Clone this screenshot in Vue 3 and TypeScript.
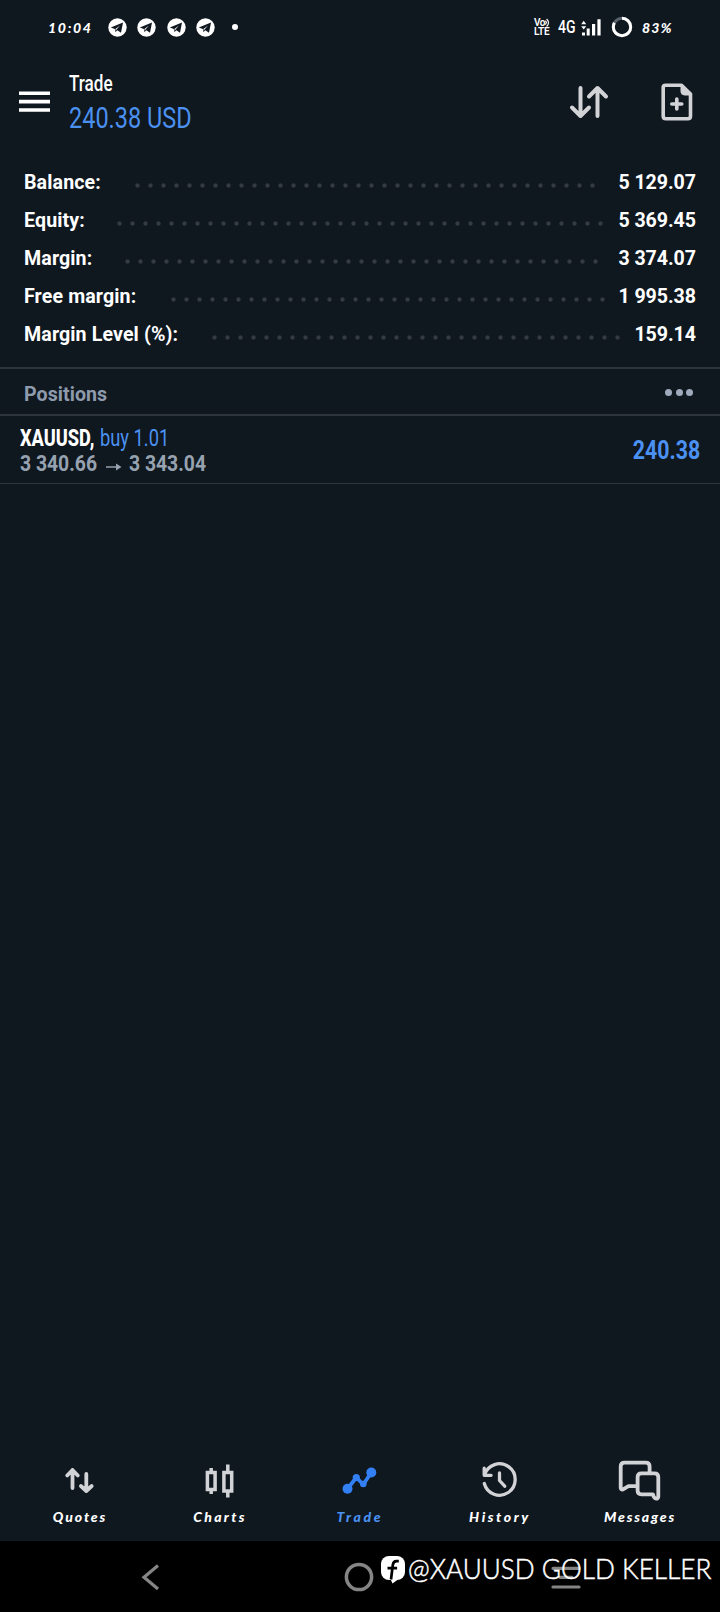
<script setup lang="ts">
interface SummaryRow {
  label: string
  value: string
  leaderStart: number
  dots: number
}

interface Tab {
  name: string
  tracking: number
}

const DOT_PITCH = 13
const ROW_INSET = 24

const summary: SummaryRow[] = [
  { label: 'Balance:', value: '5 129.07', leaderStart: 130.5, dots: 36 },
  { label: 'Equity:', value: '5 369.45', leaderStart: 112.5, dots: 38 },
  { label: 'Margin:', value: '3 374.07', leaderStart: 120.5, dots: 37 },
  { label: 'Free margin:', value: '1 995.38', leaderStart: 166.5, dots: 34 },
  { label: 'Margin Level (%):', value: '159.14', leaderStart: 207.5, dots: 32 },
]

const tabs: Tab[] = [
  { name: 'Quotes', tracking: 1.9 },
  { name: 'Charts', tracking: 2.3 },
  { name: 'Trade', tracking: 2.7 },
  { name: 'History', tracking: 2.6 },
  { name: 'Messages', tracking: 1.8 },
]
const activeTab = 'Trade'
</script>

<template>
  <div class="screen">
    <header class="status">
      <span class="clock">10:04</span>
      <div class="notices">
        <svg v-for="n in 4" :key="n" class="telegram" viewBox="0 0 19 19">
          <circle cx="9.5" cy="9.5" r="9.2" fill="#fff" />
          <path d="M2.8 9.5 15 4.6 13 14.8 9.4 12.2 7.4 14 6.8 11Z" fill="#0f171f" />
          <path d="M7.4 10.9 12 7.5 8.5 11.5 7.8 13Z" fill="#fff" />
        </svg>
        <span class="more-notices"></span>
      </div>
      <div class="system">
        <span class="volte">
          <span class="vo">Vo<svg viewBox="0 0 6 9"><path d="M.3 2.8q2 1.7 0 3.8M1.6 1q3.8 3.5 0 7.5" fill="none" stroke="#fff" stroke-width="1.2" /></svg></span>
          <span class="lte">LTE</span>
        </span>
        <span class="network"><span>4G</span></span>
        <svg class="signal" viewBox="0 0 20 17">
          <path d="M2.7 1.8 5.2 5.2H.2ZM2.7 10.6 5.2 7.2H.2Z" fill="#fff" />
          <path d="M1 13.500h3v3H1ZM5.700 9.500h3v7h-3ZM11 5h3.200v11.500H11ZM16.400.300h3.200v16.200h-3.200Z" fill="#fff" />
        </svg>
        <svg class="battery" viewBox="0 0 22 22">
          <circle cx="11" cy="11" r="8.7" fill="none" stroke="#59616a" stroke-width="3" />
          <circle cx="11" cy="11" r="8.7" fill="none" stroke="#fff" stroke-width="3" pathLength="100" stroke-dasharray="83 17" transform="rotate(-90 11 11)" />
        </svg>
        <span class="percent">83%</span>
      </div>
    </header>

    <section class="titlebar">
      <svg class="burger" viewBox="0 0 32 22"><path d="M0 2.2h31M0 10.6h31M0 19h31" stroke="#fff" stroke-width="3.6" /></svg>
      <div class="heading">
        <h1><span>Trade</span></h1>
        <p><span>240.38 USD</span></p>
      </div>
      <svg class="sort" viewBox="0 0 40 34">
        <path d="M11.5 3v28M3 22.5l8.5 8.5 8.5-8.5M28.5 31V3M20 11.5 28.5 3l8.5 8.5" fill="none" stroke="#d2d3d6" stroke-width="4" stroke-linecap="round" stroke-linejoin="round" />
      </svg>
      <svg class="new-order" viewBox="0 0 32 38">
        <path d="M4.5 2.2H20.5L29.5 11V33q0 2.7-2.7 2.7H4.9Q2.2 35.7 2.2 33V4.5Q2.2 2.2 4.5 2.2Z" fill="none" stroke="#d2d3d6" stroke-width="3.6" stroke-linejoin="round" />
        <path d="M19.5 2.5h1.5l8.7 8.6v1.5h-6q-4.2-.5-4.2-4.6Z" fill="#d2d3d6" />
        <path d="M10.8 21h10M15.8 16v10" stroke="#d2d3d6" stroke-width="3.6" stroke-linecap="round" />
      </svg>
    </section>

    <section class="summary">
      <div v-for="row in summary" :key="row.label" class="summary-row">
        <span class="label" :style="{ flexBasis: row.leaderStart - ROW_INSET + 'px' }">{{ row.label }}</span>
        <span class="leader" :style="{ width: row.dots * DOT_PITCH + 'px' }"></span>
        <span class="value">{{ row.value }}</span>
      </div>
    </section>

    <section class="positions-head">
      <h2>Positions</h2>
      <span class="dots"><i></i><i></i><i></i></span>
    </section>

    <article class="position">
      <div class="deal">
        <div class="line"><span class="symbol">XAUUSD,</span><span class="side">buy 1.01</span></div>
        <div class="line prices">
          <span class="open">3 340.66</span>
          <svg class="arrow" viewBox="0 0 16 10"><path d="M0 5h13" stroke="#97a2b0" stroke-width="1.5" /><path d="M10 1.5 15.5 5 10 8.5Z" fill="#97a2b0" /></svg>
          <span class="open">3 343.04</span>
        </div>
      </div>
      <span class="profit">240.38</span>
    </article>

    <main class="blank"></main>

    <nav class="tabs">
      <div v-for="tab in tabs" :key="tab.name" class="tab" :class="{ active: tab.name === activeTab }">
        <svg viewBox="0 0 48 48" fill="none" stroke="currentColor" stroke-linecap="round" stroke-linejoin="round">
          <g v-if="tab.name === 'Quotes'" stroke-width="3.8">
            <path d="M16.5 31V13M11.2 18.5l5.3-5.5 5.3 5.5M30.3 17v17M24.9 29l5.4 5 5.4-5" />
          </g>
          <g v-else-if="tab.name === 'Charts'" stroke-width="3.5" stroke-linecap="butt" stroke-linejoin="miter">
            <path d="M11.4 15.6h7.7v16.8h-7.7ZM15.2 11v4M15.2 33v4M27.9 15.6h7.8v18.3h-7.8ZM31.8 7.5V15M31.8 34v6.5" />
          </g>
          <g v-else-if="tab.name === 'Trade'" stroke-width="3.8">
            <path d="M11.5 31.8 20.3 20.5 27.3 27.5 35.3 15.5" />
            <g fill="currentColor" stroke="none">
              <circle cx="11.5" cy="31.8" r="5" /><circle cx="20.3" cy="20.5" r="3.6" />
              <circle cx="27.3" cy="27" r="3.3" /><circle cx="35.3" cy="15.5" r="5" />
            </g>
          </g>
          <g v-else-if="tab.name === 'History'" stroke-width="3.3">
            <path d="M8.5 17.8A15.7 15.7 0 1 1 8.3 26.5M8.2 11.2v7.1h6.9M23.5 16v7.5l5.2 5.7" />
          </g>
          <g v-else stroke-width="3.8">
            <path d="M19.5 29.2H12.5L7 32.4q-2.3.6-2.3-1.6V9.5q0-3.8 3.8-3.8H29.8q3.8 0 3.8 3.8V15" />
            <path d="M25.4 16.3H38.5q3.8 0 3.8 3.8V39.8q-.3 2.2-2.6 1.6Q37.8 41 37 37.3H25.4q-3.8 0-3.8-3.8V20.1q0-3.8 3.8-3.8Z" />
          </g>
        </svg>
        <span :style="{ letterSpacing: tab.tracking + 'px' }">{{ tab.name }}</span>
      </div>
    </nav>

    <footer class="system-nav">
      <svg class="back" viewBox="0 0 20 28"><path d="M17 2.5 3 14.3 17 26" fill="none" stroke="#858585" stroke-width="3.2" /></svg>
      <svg class="home" viewBox="0 0 30 30"><circle cx="15" cy="15" r="12.6" fill="none" stroke="#858585" stroke-width="3.5" /></svg>
      <svg class="recent" viewBox="0 0 30 24"><path d="M2 3.3h26M9 12.3h12M2 22h26" stroke="#858585" stroke-width="3.2" stroke-linecap="round" /></svg>
      <div class="watermark">
        <svg viewBox="0 0 26 29">
          <rect x="1" y="1" width="24" height="24" rx="8" fill="#fff" />
          <path d="M9.5 22 18 24.5 12.5 28.5Z" fill="#fff" />
          <path d="M7.5 13.2h9.6M11 24.5 12.8 10q.6-4 4-3.8h2" fill="none" stroke="#000" stroke-width="2.7" />
        </svg>
        <span>@XAUUSD GOLD KELLER</span>
      </div>
    </footer>
  </div>
</template>

<style>
body {
  margin: 0;
  background: #0f171f;
}
</style>

<style scoped>
.screen {
  display: flex;
  flex-direction: column;
  width: 720px;
  height: 1612px;
  overflow: hidden;
  background: #0f171f;
  color: #fff;
  font-family: Roboto, "Liberation Sans", sans-serif;
}
svg {
  display: block;
  flex: none;
}
.status {
  display: flex;
  align-items: center;
  box-sizing: border-box;
  height: 54px;
  padding: 0 48px 0 48px;
}
.clock,
.percent {
  font: italic 900 14px/20px Lato, sans-serif;
  letter-spacing: 1.7px;
  white-space: nowrap;
  padding-top: 2px;
}
.clock {
  width: 59.5px;
}
.notices {
  display: flex;
  align-items: center;
  gap: 10.6px;
}
.telegram {
  width: 19px;
  height: 19px;
}
.more-notices {
  width: 6px;
  height: 6px;
  margin-left: 6px;
  border-radius: 50%;
  background: #fff;
}
.system {
  display: flex;
  align-items: center;
  margin-left: auto;
}
.volte {
  display: flex;
  flex-direction: column;
  width: 24px;
  font-weight: 600;
}
.vo {
  display: flex;
  font-size: 10px;
  line-height: 9px;
  letter-spacing: -0.5px;
}
.vo svg {
  width: 6px;
  height: 9px;
}
.lte {
  font-size: 10px;
  line-height: 9px;
  letter-spacing: -0.2px;
}
.network {
  width: 23px;
  font-size: 18px;
  line-height: 20px;
}
.network span {
  display: block;
  transform: scaleX(0.78);
  transform-origin: left;
  font-weight: 500;
}
.signal {
  width: 20px;
  height: 17px;
}
.battery {
  width: 22px;
  height: 22px;
  margin: 0 9px 0 10px;
}
.percent {
  width: 30px;
  letter-spacing: 1.2px;
}
.titlebar {
  display: flex;
  align-items: center;
  height: 96px;
}
.burger {
  width: 32px;
  height: 22px;
  margin: 0 18px 0 19px;
}
.heading {
  flex: 1;
  white-space: nowrap;
}
.heading h1,
.heading p {
  margin: 0;
  font-weight: 400;
}
.heading span {
  display: inline-block;
  transform-origin: left;
}
.heading h1 {
  font-size: 22.5px;
  line-height: 30px;
}
.heading h1 span {
  transform: scaleX(0.76);
  font-weight: 500;
}
.heading p {
  color: #4b91f1;
  font-size: 29px;
  line-height: 38px;
}
.heading p span {
  transform: translateY(1px) scaleX(0.81);
}
.sort {
  width: 40px;
  height: 34px;
  margin-right: 52px;
}
.new-order {
  width: 32px;
  height: 38px;
  margin-right: 27px;
}
.summary {
  box-sizing: border-box;
  height: 217px;
  padding: 13px 24px 0;
}
.summary-row {
  display: flex;
  align-items: center;
  height: 38px;
  font-size: 19.6px;
  font-weight: 700;
  letter-spacing: -0.05px;
  white-space: nowrap;
}
.label {
  flex: none;
  letter-spacing: 0.12px;
}
.leader {
  height: 5px;
  margin-top: 6px;
  background: radial-gradient(circle at 6.5px 2.5px, #343b43 1.6px, transparent 2.6px) 0 0 / 13px 5px repeat-x;
}
.value {
  margin-left: auto;
}
.positions-head {
  display: flex;
  align-items: center;
  justify-content: space-between;
  box-sizing: border-box;
  height: 49px;
  padding: 4px 27px 0 24px;
  border-top: 2px solid #2d343d;
  border-bottom: 2px solid #2d343d;
}
.positions-head h2 {
  margin: 2px 0 0;
  color: #8e9bad;
  font-size: 19.6px;
  font-weight: 700;
  letter-spacing: 0.05px;
}
.dots {
  display: flex;
  gap: 3.4px;
  margin-top: -3px;
}
.dots i {
  width: 7px;
  height: 7px;
  border-radius: 50%;
  background: #9fabbd;
}
.position {
  display: flex;
  justify-content: space-between;
  box-sizing: border-box;
  height: 68px;
  padding: 10px 20px 0 20px;
  border-bottom: 1px solid #2d343d;
}
.line {
  display: flex;
  align-items: center;
  height: 25px;
  font-size: 23px;
  line-height: 25px;
  white-space: nowrap;
}
.line span {
  transform-origin: left;
}
.symbol {
  width: 80px;
  font-weight: 800;
  transform: scaleX(0.79);
}
.side {
  color: #4b91f1;
  transform: scaleX(0.795);
}
.prices {
  color: #97a2b0;
  font-size: 22.5px;
}
.open {
  width: 86px;
  font-weight: 700;
  transform: scaleX(0.86);
}
.arrow {
  width: 16px;
  height: 10px;
  margin: 6px 7px 0 0;
}
.profit {
  height: 30px;
  margin-top: 9px;
  color: #4b91f1;
  font-size: 26px;
  font-weight: 700;
  line-height: 30px;
  transform: scaleX(0.82);
  transform-origin: right;
}
.blank {
  flex: 1;
}
.tabs {
  display: flex;
  justify-content: center;
  height: 84px;
}
.tab {
  display: flex;
  flex-direction: column;
  align-items: center;
  width: 140px;
  color: #d2d3d6;
}
.tab svg {
  width: 48px;
  height: 48px;
}
.tab span {
  color: #fff;
  font: italic 900 14px/24px Lato, sans-serif;
}
.tab.active {
  color: #3380f5;
}
.tab.active span {
  color: #4b91f1;
}
.system-nav {
  position: relative;
  display: flex;
  align-items: center;
  height: 71px;
  background: #000;
}
.back {
  width: 20px;
  height: 28px;
  margin-left: 141px;
}
.home {
  width: 30px;
  height: 30px;
  margin-left: 183px;
}
.recent {
  width: 30px;
  height: 24px;
  margin-left: 177px;
}
.watermark {
  position: absolute;
  top: 14px;
  left: 380px;
  display: flex;
  align-items: center;
  gap: 2px;
}
.watermark svg {
  width: 26px;
  height: 29px;
}
.watermark span {
  font: 300 28px/28px Lato, sans-serif;
  white-space: nowrap;
  margin-top: -3px;
  transform: scaleX(0.935);
  transform-origin: left;
  -webkit-text-stroke: 0.5px #fff;
}
</style>
